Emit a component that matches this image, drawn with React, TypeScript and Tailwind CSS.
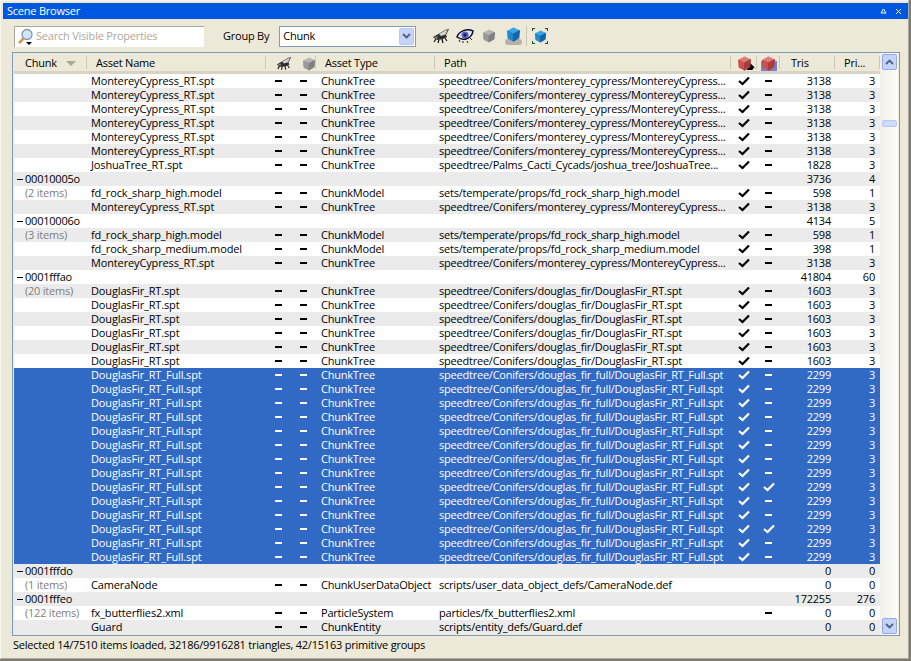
import { ReactNode } from "react";

type Row = {
  chunk?: string;
  count?: string;
  name?: string;
  type?: string;
  path?: string;
  c1?: "check" | "dash";
  c2?: "check" | "dash";
  dashes?: boolean;
  tris: string;
  pri: string;
  selected?: boolean;
};

const MC_PATH = "speedtree/Conifers/monterey_cypress/MontereyCypress...";
const tree = (name: string, path: string, tris: string, pri: string, count?: string, selected?: boolean, c2: "check" | "dash" = "dash"): Row => ({
  name, type: "ChunkTree", path, tris, pri, count, selected, c1: "check", c2, dashes: true,
});
const cypress = (count?: string) => tree("MontereyCypress_RT.spt", MC_PATH, "3138", "3", count);
const fir = (count?: string) => tree("DouglasFir_RT.spt", "speedtree/Conifers/douglas_fir/DouglasFir_RT.spt", "1603", "3", count);
const full = (c2: "check" | "dash" = "dash") =>
  tree("DouglasFir_RT_Full.spt", "speedtree/Conifers/douglas_fir_full/DouglasFir_RT_Full.spt", "2299", "3", undefined, true, c2);
const model = (name: string, tris: string, count?: string): Row => ({
  name, type: "ChunkModel", path: `sets/temperate/props/${name}`, tris, pri: "1", count, c1: "check", c2: "dash", dashes: true,
});

const rows: Row[] = [
  cypress(), cypress(), cypress(), cypress(), cypress(), cypress(),
  tree("JoshuaTree_RT.spt", "speedtree/Palms_Cacti_Cycads/joshua_tree/JoshuaTree...", "1828", "3"),
  { chunk: "00010005o", tris: "3736", pri: "4" },
  model("fd_rock_sharp_high.model", "598", "(2 items)"),
  cypress(),
  { chunk: "00010006o", tris: "4134", pri: "5" },
  model("fd_rock_sharp_high.model", "598", "(3 items)"),
  model("fd_rock_sharp_medium.model", "398"),
  cypress(),
  { chunk: "0001fffao", tris: "41804", pri: "60" },
  fir("(20 items)"), fir(), fir(), fir(), fir(), fir(),
  full(), full(), full(), full(), full(), full(), full(), full(),
  full("check"), full(), full(), full("check"), full(), full(),
  { chunk: "0001fffdo", tris: "0", pri: "0" },
  { count: "(1 items)", name: "CameraNode", type: "ChunkUserDataObject", path: "scripts/user_data_object_defs/CameraNode.def", tris: "0", pri: "0", dashes: true },
  { chunk: "0001fffeo", tris: "172255", pri: "276" },
  { count: "(122 items)", name: "fx_butterflies2.xml", type: "ParticleSystem", path: "particles/fx_butterflies2.xml", tris: "0", pri: "0", c2: "dash", dashes: true },
  { name: "Guard", type: "ChunkEntity", path: "scripts/entity_defs/Guard.def", tris: "0", pri: "0", dashes: true },
];

const GRID = "grid w-[866px] grid-cols-[73px_179px_25px_25px_119px_296px_26px_23px_55px_45px]";

function Fly({ className }: { className?: string }) {
  return (
    <svg viewBox="0 0 18 16" className={className}>
      <path d="M1 9 L8 5 L15 1 L17 1 L14 7 L15 9 L11 11 L6 12 L3 11 Z" fill="#2e2e2e" />
      <path d="M7 6 L16 1 L13.5 6.5 L9 8 Z" fill="#d4d3cc" />
      <path d="M1.5 9 L6 8 L5 11 L3 11 Z" fill="#777" />
      <path d="M4 11 L2 14 M7 12 L6 15 M10 11 L11 15 M13 10 L15 13" stroke="#111" strokeWidth="1.2" fill="none" />
    </svg>
  );
}

function Eye({ className }: { className?: string }) {
  return (
    <svg viewBox="0 0 18 16" className={className}>
      <path d="M1 9 C3 3 11 0 17 3 C16 10 8 14 1 9 Z" fill="#e4e6f6" stroke="#0e0e28" strokeWidth="1.5" />
      <circle cx="9" cy="7" r="3.6" fill="#5a62c0" />
      <circle cx="9" cy="7" r="1.5" fill="#141438" />
      <path d="M3 12 L4 14 M7 13 L7 15 M11 13 L12 15 M14 10 L16 12" stroke="#23233f" strokeWidth="1" />
    </svg>
  );
}

function Cube({ top, left, right, className }: { top: string; left: string; right: string; className?: string }) {
  return (
    <svg viewBox="0 0 14 14" className={className}>
      <path d="M1.5 4 L7 1 L12.5 3.5 L7 6.5 Z" fill={top} stroke={top} strokeWidth="1" strokeLinejoin="round" />
      <path d="M1.5 4 L7 6.5 L7 13 L2 10.5 Z" fill={left} stroke={left} strokeWidth="1" strokeLinejoin="round" />
      <path d="M7 6.5 L12.5 3.5 L12 10 L7 13 Z" fill={right} stroke={right} strokeWidth="1" strokeLinejoin="round" />
    </svg>
  );
}

const GrayCube = ({ className }: { className?: string }) => <Cube top="#b4b4b4" left="#999999" right="#808080" className={className} />;
const BlueCube = ({ className }: { className?: string }) => <Cube top="#35a8e8" left="#1f8ad0" right="#1565a8" className={className} />;
const RedCube = ({ className }: { className?: string }) => <Cube top="#dc7c7c" left="#cc5050" right="#ac3c3c" className={className} />;

function IconButton({ children }: { children: ReactNode }) {
  return <div className="flex h-[20px] w-[24px] items-center justify-center">{children}</div>;
}

function HeaderCell({ children, className = "" }: { children?: ReactNode; className?: string }) {
  return (
    <div className={`relative mt-[2px] flex h-[15px] items-center ${className}`}>
      {children}
      <span className="absolute right-0 top-0 h-[13px] w-[1px] bg-[#cbc7b8]" />
    </div>
  );
}

function Mark({ kind, selected }: { kind?: "check" | "dash"; selected?: boolean }) {
  const color = selected ? "#ffffff" : "#000000";
  if (kind === "dash") {
    return <span className="h-[2px] w-[7px]" style={{ backgroundColor: color }} />;
  }
  if (kind === "check") {
    return (
      <svg viewBox="0 0 12 10" className="h-[10px] w-[12px]">
        <path d="M1 5 L4.5 8 L11 1.5" fill="none" stroke={color} strokeWidth="2.2" />
      </svg>
    );
  }
  return null;
}

function TableRow({ row, index }: { row: Row; index: number }) {
  const bg = row.selected ? "bg-[#316ac5] text-white" : index % 2 === 1 ? "bg-[#ebebeb] text-black" : "bg-white text-black";
  return (
    <div className={`${GRID} ${bg} h-[14px] items-center leading-[14px]`}>
      <div className="flex items-center whitespace-nowrap">
        {row.chunk ? (
          <>
            <span className="ml-[3px] mr-[2px] h-[1px] w-[6px] bg-black" />
            <span>{row.chunk}</span>
          </>
        ) : (
          <span className="pl-[11px] text-[#808080]">{row.count}</span>
        )}
      </div>
      <div className="whitespace-nowrap pl-[4px] tracking-[-0.14px]">{row.name}</div>
      <div className="flex justify-center">{row.dashes && <Mark kind="dash" selected={row.selected} />}</div>
      <div className="flex justify-center">{row.dashes && <Mark kind="dash" selected={row.selected} />}</div>
      <div className="whitespace-nowrap pl-[5px]">{row.type}</div>
      <div className="whitespace-nowrap pl-[4px]">{row.path}</div>
      <div className="flex justify-center"><Mark kind={row.c1} selected={row.selected} /></div>
      <div className="flex justify-center"><Mark kind={row.c2} selected={row.selected} /></div>
      <div className="pr-[4px] text-right">{row.tris}</div>
      <div className="pr-[5px] text-right">{row.pri}</div>
    </div>
  );
}

function ScrollButton({ up }: { up?: boolean }) {
  return (
    <div className={`flex h-[16px] w-[15px] items-center justify-center rounded-[2px] border border-[#93a9e4] bg-[#c5d4f8] ${up ? "" : "mt-auto"}`}>
      <svg viewBox="0 0 9 6" className="h-[6px] w-[9px]">
        <path d={up ? "M1 5 L4.5 1.5 L8 5" : "M1 1 L4.5 4.5 L8 1"} fill="none" stroke="#4d6185" strokeWidth="1.8" />
      </svg>
    </div>
  );
}

export default function App() {
  return (
    <div className="h-[661px] w-[911px] overflow-hidden border-b-2 border-r-2 border-b-[#7d7b72] border-r-[#7d7b72] bg-[#ece9d8]">
      <div className="flex h-full flex-col border-b border-l border-r border-t border-b-[#aba99d] border-l-[#f8f6ec] border-r-[#aba99d] border-t-[#f8f6ec] pl-[2px] pt-[2px] font-['Open_Sans','Noto_Sans',sans-serif] text-[11px] tracking-[-0.22px] text-black">
        {/* Title bar */}
        <div className="flex h-[16px] items-center justify-between bg-[#0058e0] pl-[4px] pr-[6px] text-white">
          <span>Scene Browser</span>
          <div className="flex items-center gap-[8px]">
            <svg viewBox="0 0 7 6" className="h-[6px] w-[7px]">
              <path d="M3.5 1 L6 5 L1 5 Z" fill="none" stroke="#fff" strokeWidth="1" />
            </svg>
            <svg viewBox="0 0 7 7" className="h-[7px] w-[7px]">
              <path d="M1 1 L6 6 M6 1 L1 6" stroke="#fff" strokeWidth="1" />
            </svg>
          </div>
        </div>

        {/* Toolbar */}
        <div className="flex h-[33px] items-center pl-[11px] pt-[1px]">
          <div className="flex h-[21px] w-[190px] items-center border-l border-t border-[#aca899] bg-white text-[#aca899]">
            <svg viewBox="0 0 18 18" className="ml-[2px] h-[18px] w-[18px] shrink-0">
              <circle cx="10" cy="6.5" r="5" fill="#d5e6f7" stroke="#7d97b5" strokeWidth="1.3" />
              <path d="M6.5 10.5 L2 15" stroke="#d09a48" strokeWidth="2.6" />
              <path d="M9 14 L15 14 L12 17 Z" fill="#000" />
            </svg>
            <span className="ml-[1px]">Search Visible Properties</span>
          </div>
          <span className="ml-[19px]">Group By</span>
          <div className="ml-[10px] flex h-[21px] w-[137px] items-center justify-between border border-[#7f9db9] bg-white pl-[3px] pr-[1px]">
            <span>Chunk</span>
            <div className="flex h-[17px] w-[15px] items-center justify-center rounded-[2px] border border-[#b4c8f6] bg-[#c5d4f8]">
              <svg viewBox="0 0 9 6" className="h-[6px] w-[9px]">
                <path d="M1 1 L4.5 4.5 L8 1" fill="none" stroke="#4d6185" strokeWidth="1.8" />
              </svg>
            </div>
          </div>
          <div className="ml-[13px] flex items-center">
            <IconButton><Fly className="h-[16px] w-[18px]" /></IconButton>
            <IconButton><Eye className="h-[16px] w-[18px]" /></IconButton>
            <IconButton><GrayCube className="h-[14px] w-[14px]" /></IconButton>
            <IconButton>
              <div className="relative flex h-[18px] w-[17px] items-start justify-center">
                <span className="absolute bottom-0 left-0 h-[6px] w-[17px] rounded-[3px] bg-[#b5b3a6]" />
                <BlueCube className="relative h-[15px] w-[15px]" />
              </div>
            </IconButton>
            <span className="mx-[1px] h-[20px] w-[1px] bg-[#c9c6b6]" />
            <IconButton>
              <div className="relative flex h-[16px] w-[16px] items-center justify-center">
                <BlueCube className="h-[13px] w-[13px]" />
                <span className="absolute left-0 top-0 h-[3px] w-[3px] border-l border-t border-[#14532d]" />
                <span className="absolute right-0 top-0 h-[3px] w-[3px] border-r border-t border-[#14532d]" />
                <span className="absolute bottom-0 left-0 h-[3px] w-[3px] border-b border-l border-[#14532d]" />
                <span className="absolute bottom-0 right-0 h-[3px] w-[3px] border-b border-r border-[#14532d]" />
              </div>
            </IconButton>
          </div>
        </div>

        {/* Table frame */}
        <div className="ml-[9px] mr-[8px] flex h-[584px] border border-[#7f9db9] pl-[1px]">
          <div className="flex w-[866px] flex-col pt-[1px]">
            <div className={`${GRID} h-[20px] border-b-[3px] border-[#d8d4c5] bg-[#ece9d8]`}>
              <HeaderCell className="pl-[11px]">
                <span>Chunk</span>
                <svg viewBox="0 0 10 5" className="ml-[9px] h-[5px] w-[10px]"><path d="M0 0 L10 0 L5 5 Z" fill="#aca899" /></svg>
              </HeaderCell>
              <HeaderCell className="pl-[9px]">Asset Name</HeaderCell>
              <div className="mt-[1px] flex h-[16px] items-center justify-center pl-[10px]"><Fly className="h-[15px] w-[16px] shrink-0" /></div>
              <HeaderCell className="justify-center pl-[10px]"><GrayCube className="h-[14px] w-[14px] shrink-0" /></HeaderCell>
              <HeaderCell className="pl-[9px]">Asset Type</HeaderCell>
              <HeaderCell className="pl-[9px]">Path</HeaderCell>
              <HeaderCell className="justify-center">
                <div className="relative">
                  <span className="absolute bottom-[1px] right-[-3px] h-[7px] w-[8px] bg-black" style={{ clipPath: "polygon(100% 60%,45% 0,0 100%,70% 100%)" }} />
                  <RedCube className="relative h-[15px] w-[15px]" />
                </div>
              </HeaderCell>
              <HeaderCell className="justify-center">
                <div className="flex h-[15px] w-[16px] items-center justify-center bg-[linear-gradient(to_bottom,transparent_35%,#7a80c8_35%)]">
                  <RedCube className="h-[15px] w-[15px] shrink-0" />
                </div>
              </HeaderCell>
              <HeaderCell className="pl-[11px]">Tris</HeaderCell>
              <HeaderCell className="pl-[9px]">Pri...</HeaderCell>
            </div>
            {rows.map((row, i) => (
              <TableRow key={i} row={row} index={i} />
            ))}
          </div>
          <div className="flex w-[18px] flex-col items-end bg-gradient-to-r from-[#f0efe8] to-[#fdfdfb] py-[1px] pr-[1px]">
            <ScrollButton up />
            <div className="mt-[50px] h-[7px] w-[15px] rounded-[2px] border border-[#b4c8f6] bg-[#d0dcfa]" />
            <ScrollButton />
          </div>
        </div>

        {/* Status bar */}
        <div className="flex h-[18px] items-center pl-[10px]">
          Selected 14/7510 items loaded, 32186/9916281 triangles, 42/15163 primitive groups
        </div>
      </div>
    </div>
  );
}
